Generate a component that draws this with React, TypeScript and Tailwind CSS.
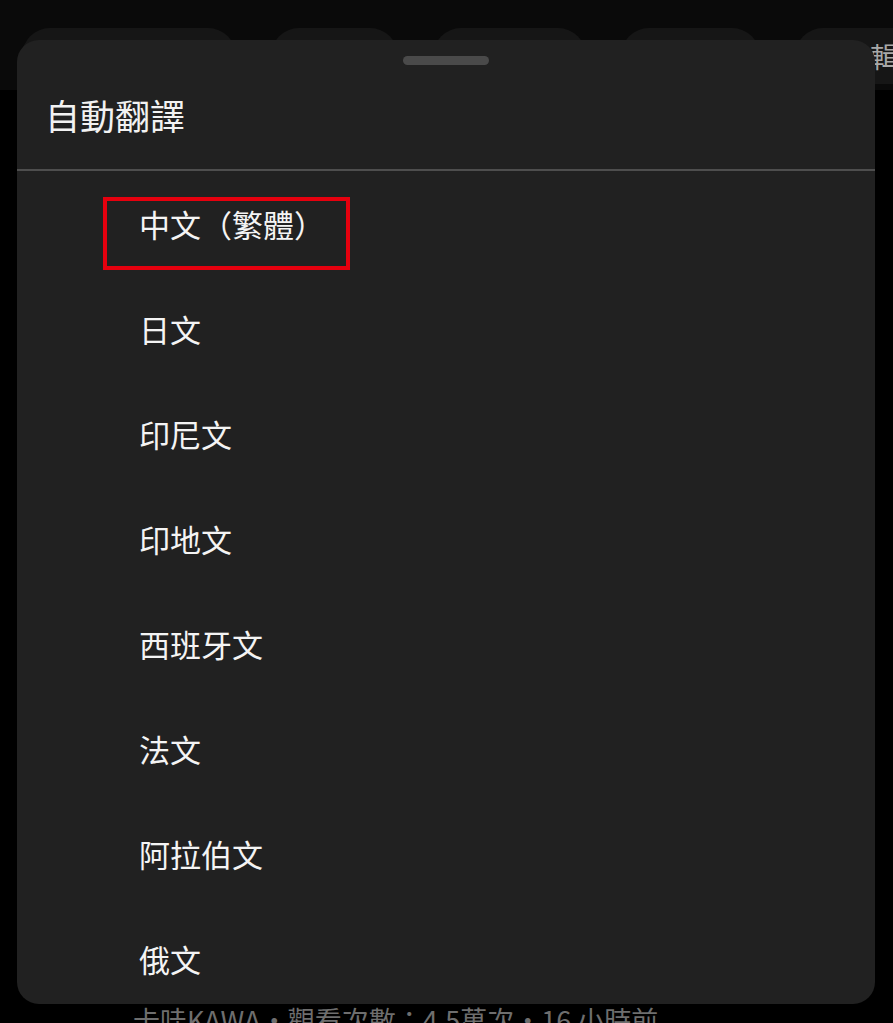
const languages = ["中文（繁體）", "日文", "印尼文", "印地文", "西班牙文", "法文", "阿拉伯文", "俄文"];

const chips = [
  { w: "w-[214px]", label: "" },
  { w: "w-[127px]", label: "" },
  { w: "w-[153px]", label: "" },
  { w: "w-[139px]", label: "" },
  { w: "w-[160px]", label: "合輯" },
];

export default function App() {
  return (
    <div
      className="relative w-[893px] h-[1023px] overflow-hidden bg-black"
      style={{ fontFamily: '"Noto Sans CJK TC", "Noto Sans", sans-serif' }}
    >
      {/* page behind the sheet */}
      <div className="flex flex-col h-full">
        <div className="bg-[#0a0a0a] pt-[28px] pb-[6px] pl-[22px]">
          <div className="flex gap-[35px]">
            {chips.map((c, i) => (
              <div
                key={i}
                className={`${c.w} h-[56px] shrink-0 rounded-full bg-[#161616] flex items-center pl-[47px] text-[28px] leading-none text-[#a8a8a8]`}
              >
                {c.label}
              </div>
            ))}
          </div>
        </div>
        <div className="flex-1" />
        <div className="pl-[133px] -mb-[10px] text-[27px] leading-[27px] text-[#6e6e6e] whitespace-nowrap">
          卡哇KAWA・觀看次數：4.5萬次・16 小時前
        </div>
      </div>

      {/* bottom sheet */}
      <div className="absolute left-[17px] top-[40px] w-[858px] h-[964px] rounded-[22px] bg-[#212121] overflow-hidden">
        <div className="pt-[16px] pb-[36px]">
          <div className="mx-auto w-[86px] h-[9px] rounded-full bg-[#4a4a4a]" />
          <div className="mt-[32px] pl-[28px] h-[36px] text-[35px] leading-[36px] text-[#f2f2f2]">自動翻譯</div>
        </div>
        <div className="h-[2px] bg-[#4e4e4e]" />
        <div>
          {languages.map((l) => (
            <div key={l} className="h-[105px] flex items-center pl-[122px] text-[31px] leading-none text-[#f4f4f4]">
              {l}
            </div>
          ))}
        </div>
        <div className="absolute left-[86px] top-[157px] w-[247px] h-[73px] border-4 border-[#e6000e]" />
      </div>
    </div>
  );
}
